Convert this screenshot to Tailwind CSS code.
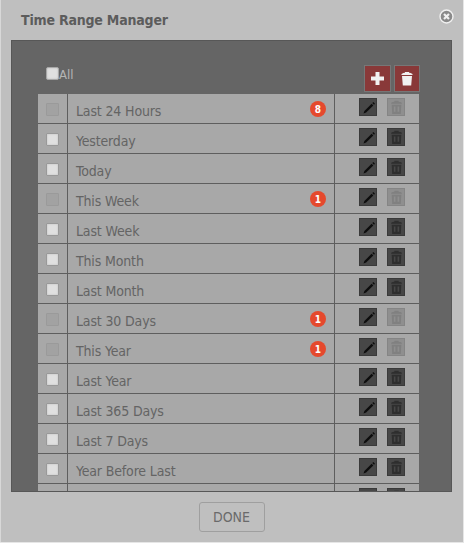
<!DOCTYPE html>
<html>
<head>
    <title>Time Range Manager</title>
    <meta charset="utf-8">
    <script src="https://cdn.jsdelivr.net/npm/@tailwindcss/browser@4"></script>
</head>
<body class="bg-[#e6e6e6]">
    <div class="w-[464px] h-[543px] bg-[#e6e6e6]">
        <div class="w-[463px] h-[542px] bg-[#bfbfbf] border-l border-l-[#d8d8d8] relative flex flex-col overflow-hidden font-['DejaVu_Sans_Condensed','DejaVu_Sans',sans-serif]">
            <!-- Title -->
            <div class="h-10 flex items-center pl-5 pt-[1px] shrink-0">
                <h1 class="text-[14px] font-bold text-[#5c5c5c] tracking-[-0.2px]">Time Range Manager</h1>
            </div>
            <svg class="absolute left-[438px] top-[9px]" width="15" height="15" viewBox="0 0 15 15">
                <circle cx="7.5" cy="7.5" r="6.5" fill="#8a8a8a" stroke="#f0f0f0" stroke-width="1.4"/>
                <path d="M5 5l5 5M10 5l-5 5" stroke="#f0f0f0" stroke-width="2.2"/>
            </svg>

            <!-- Panel -->
            <div class="ml-[10px] w-[441px] h-[452px] bg-[#656565] border border-[#575757] pl-[26px] shrink-0 overflow-hidden">
                <div class="w-[381px] h-[53px] relative">
                    <label class="absolute left-[8px] top-[26px] flex items-start text-[13px] text-[#b5b5b5]">
                        <span class="w-[13px] h-[13px] bg-[#e0e0e0] border border-[#a8a8a8] rounded-[2px] shadow-[inset_0_0_2px_#bbb]"></span>
                        <span class="leading-[16px]">All</span>
                    </label>
                    <div class="absolute left-[326px] top-[24px] flex gap-[3px]">
                        <button class="w-[27px] h-[27px] bg-[#893939] border border-[#777] flex items-center justify-center">
                            <svg width="15" height="15" viewBox="0 0 15 15"><path d="M5.500 1h4v4.500h4.500v4h-4.500v4.500h-4v-4.500h-4.500v-4h4.500z" fill="#f1f1f1"/></svg>
                        </button>
                        <button class="w-[26px] h-[27px] bg-[#893939] border border-[#777] flex items-center justify-center">
                            <svg width="14" height="16" viewBox="0 0 14 16"><path d="M1.500 3c1-1 3-1.300 3.500-1.300v-.700h4v.700c.5 0 2.500.3 3.500 1.300v1h-11zM2 5h10l-.8 9.500h-8.400z" fill="#f1f1f1"/></svg>
                        </button>
                    </div>
                </div>

                <div id="rows" class="w-[381px]"></div>
            </div>

            <!-- Footer -->
            <div class="flex-1 flex justify-center items-start pt-[10px] pr-[1px]">
                <button class="w-[66px] h-[30px] border border-[#9f9f9f] rounded-[3px] text-[14px] text-[#6a6a6a] bg-transparent">DONE</button>
            </div>
        </div>
    </div>

    <script>
        const ranges = [
            ['Last 24 Hours', 8], ['Yesterday', 0], ['Today', 0], ['This Week', 1],
            ['Last Week', 0], ['This Month', 0], ['Last Month', 0], ['Last 30 Days', 1],
            ['This Year', 1], ['Last Year', 0], ['Last 365 Days', 0], ['Last 7 Days', 0],
            ['Year Before Last', 0], ['', 0]
        ];

        const rows = document.getElementById('rows');
        ranges.forEach(([name, count]) => {
            const used = count > 0;
            rows.innerHTML += `
                <div class="h-[30px] flex bg-[#a8a8a8] border-b border-[#5e5e5e] text-[14px] text-[#646464]">
                    <div class="w-[30px] flex justify-center pt-[9px] border-r border-[#5e5e5e] shrink-0">
                        <span class="w-[13px] h-[13px] border rounded-[1px] ${used ? 'bg-[#a2a2a2] border-[#9a9a9a]' : 'bg-[#e0e0e0] border-[#999] shadow-[inset_0_0_2px_#bbb]'}"></span>
                    </div>
                    <div class="w-[267px] pl-[8px] pr-[8px] flex items-center justify-between border-r border-[#5e5e5e] shrink-0">
                        <span class="pt-[6px] tracking-[-0.15px]">${name}</span>
                        ${used ? `<span class="w-[16px] h-[16px] rounded-full bg-[#e5492d] text-white text-[10px] font-bold flex items-center justify-center mt-[1px]">${count}</span>` : ''}
                    </div>
                    <div class="flex-1 flex gap-[10px] pl-[24px] pt-[4px]">
                        <span class="w-[18px] h-[18px] bg-[#474747] border border-[#3a3a3a]">
                            <svg width="16" height="16" viewBox="0 0 16 16"><path d="M3.500 14.500l.9-2.600 7.200-7.200 1.700 1.700-7.200 7.200z" fill="#0d0d0d"/><path d="M12.300 4l1-1 1.700 1.700-1 1z" fill="#0d0d0d"/></svg>
                        </span>
                        <span class="w-[18px] h-[18px] border flex items-center justify-center ${used ? 'bg-[#8f8f8f] border-[#858585]' : 'bg-[#474747] border-[#3a3a3a]'}">
                            <svg width="13" height="15" viewBox="0 0 12 14"><path fill-rule="evenodd" d="M1 2.500c.8-.5 2-.8 3-.9v-.800h4v.800c1 .1 2.200.4 3 .9v1h-10zM1.500 4.500h9l-.5 8.500h-8zM3.500 6v5h1.500v-5zM7 6v5h1.500v-5z" fill="${used ? '#808080' : '#2e2e2e'}"/></svg>
                        </span>
                    </div>
                </div>`;
        });
    </script>
</body>
</html>
